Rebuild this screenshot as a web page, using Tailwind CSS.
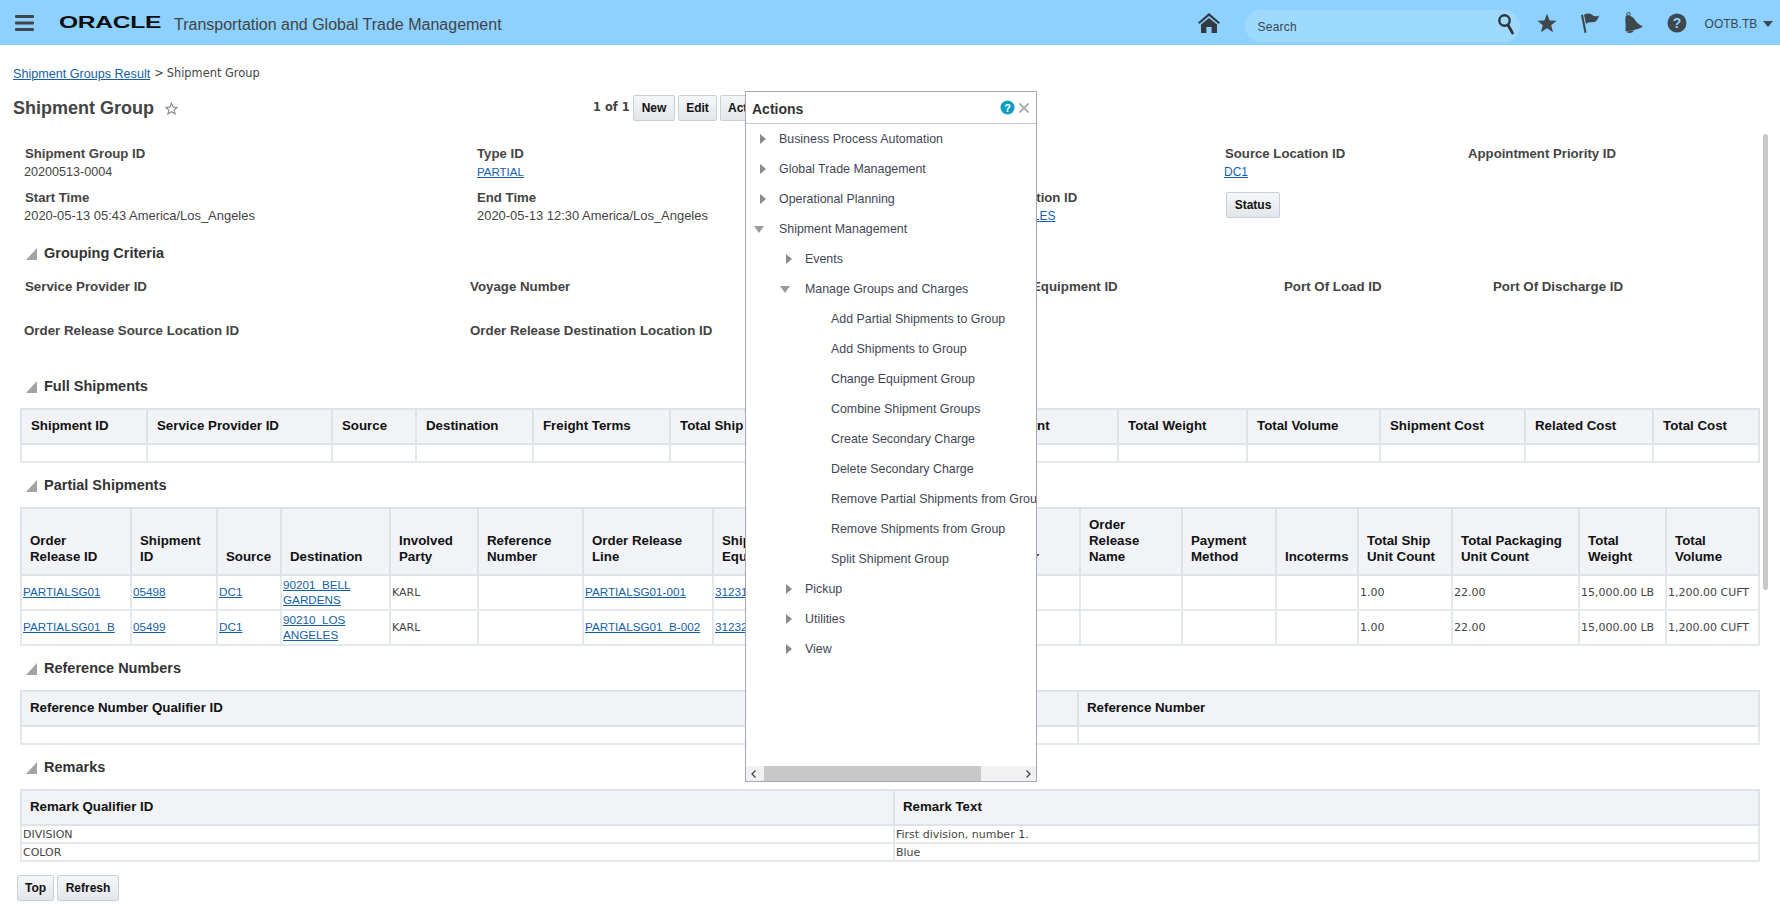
<!DOCTYPE html>
<html lang="en">
<head>
<meta charset="utf-8">
<title>Shipment Group</title>
<script src="https://cdn.jsdelivr.net/npm/@tailwindcss/browser@4"></script>
</head>
<body class="relative h-[906px] overflow-hidden bg-white font-['Liberation_Sans',Arial,sans-serif] text-[#444]">
  <!-- top bar -->
  <header class="flex h-[45px] items-center bg-[#8cd1ff]">
    <svg class="ml-[15px] h-[18px] w-[22px]" viewBox="0 0 22 18" fill="#3f474d"><rect y="1" width="19" height="3" rx="1"/><rect y="7.5" width="19" height="3" rx="1"/><rect y="14" width="19" height="3" rx="1"/></svg>
    <div class="ml-[22px] flex w-[115px] items-center">
      <span class="origin-left scale-x-[1.49] text-[16.5px] leading-none font-bold tracking-[-0.2px] text-[#0c0c0c]">ORACLE</span>
    </div>
    <span class="pt-[4px] text-[16px] text-[#444]">Transportation and Global Trade Management</span>
    <svg class="ml-[695px] h-[22px] w-[24px]" viewBox="0 0 24 22" fill="#333b40"><path d="M12 1 L23 10.5 L21.6 12 L12 4 L2.4 12 L1 10.5 Z"/><path d="M12 6 L20 12.5 V21 H14.6 V15 H9.4 V21 H4 V12.5 Z"/></svg>
    <div class="mt-[7px] ml-[24px] flex h-[32px] w-[275px] items-center justify-between rounded-full bg-[#9ed9ff] pr-[5px] pl-[13px]">
      <span class="pt-[2px] text-[12px] tracking-[0.2px] text-[#3c4650]">Search</span>
      <svg class="-mt-[4px] h-[22px] w-[18px]" viewBox="0 0 18 22" fill="none" stroke="#2f373c"><circle cx="7.5" cy="7.5" r="5.2" stroke-width="2.4"/><path d="M11 12 L15.5 20" stroke-width="2.8" stroke-linecap="round"/></svg>
    </div>
    <svg class="ml-[17px] h-[20px] w-[20px]" viewBox="0 0 24 24" fill="#3f474d"><path d="M12 1 L15.2 9 L23.5 9.4 L17 14.8 L19.2 23 L12 18.4 L4.8 23 L7 14.8 L.5 9.4 L8.8 9 Z"/></svg>
    <svg class="ml-[22px] h-[22px] w-[22px]" viewBox="0 0 22 22" fill="#3f474d"><path d="M2 3 L4 2.500 L7.500 20.500 L5.500 21 Z"/><path d="M5 3 C9 0.500 12 1.500 14 3.500 C16 4.800 18 4.500 20.500 3.500 C19 6 18.500 8 16.500 9.500 C13.500 11 10 9 7 12 Z"/></svg>
    <svg class="ml-[23px] h-[22px] w-[20px]" viewBox="0 0 20 22" fill="#3f474d"><circle cx="4.500" cy="2.200" r="1.700" fill="none" stroke="#3f474d"/><path d="M1.800 3.800 C5.500 2.800 9 4.500 11 8 C12.800 11 15.500 12.800 19 14.500 C14 17.500 7 19.300 1.200 19 C2.600 14 .5 9 1.800 3.800 Z"/><path d="M2.500 19.500 C4 21.800 8.500 21.500 10 18.500 Z"/></svg>
    <svg class="ml-[23px] h-[20px] w-[20px]" viewBox="0 0 20 20"><circle cx="10" cy="10" r="9.500" fill="#3f474d"/><text x="10" y="15" text-anchor="middle" font-size="14" font-weight="700" font-family="Liberation Sans" fill="#8cd1ff">?</text></svg>
    <span class="ml-[18px] pt-[2px] text-[12px] text-[#3c4650]">OOTB.TB</span>
    <svg class="mt-[2px] ml-[6px] h-[6px] w-[10px]" viewBox="0 0 10 6" fill="#3f474d"><path d="M0 0 H10 L5 6 Z"/></svg>
  </header>

  <!-- breadcrumb -->
  <div class="mt-[21px] flex h-[16px] items-center pl-[13px] text-[11.4px] font-['DejaVu_Sans',sans-serif]">
    <a class="font-['Liberation_Sans',sans-serif] text-[12.6px] text-[#145fa8] underline">Shipment Groups Result</a>
    <span class="mr-[3px] ml-[4px]">&gt;</span>
    <span>Shipment Group</span>
  </div>

  <!-- title and toolbar -->
  <div class="mt-[13px] flex h-[26px] items-center pl-[13px]">
    <h1 class="w-[152px] text-[18px] font-bold text-[#444]">Shipment Group</h1>
    <svg class="h-[13px] w-[13px]" viewBox="0 0 24 24" fill="none" stroke="#888" stroke-width="2"><path d="M12 2 L15 9.500 L22.500 10 L16.800 14.800 L18.700 22 L12 18 L5.300 22 L7.200 14.800 L1.500 10 L9 9.500 Z"/></svg>
    <span class="ml-[415px] w-[40px] font-['DejaVu_Sans',sans-serif] text-[11.4px] font-bold">1 of 1</span>
    <div class="flex gap-[3px]">
      <button class="h-[26px] w-[42px] rounded-[2px] border border-[#c9d1d8] bg-linear-to-b from-[#f5f6f8] to-[#e2e6ea] text-[12px] font-bold text-[#111]">New</button>
      <button class="h-[26px] w-[39px] rounded-[2px] border border-[#c9d1d8] bg-linear-to-b from-[#f5f6f8] to-[#e2e6ea] text-[12px] font-bold text-[#111]">Edit</button>
      <button class="h-[26px] w-[60px] rounded-[2px] border border-[#c9d1d8] bg-linear-to-b from-[#f5f6f8] to-[#e2e6ea] text-[12px] font-bold text-[#111]">Actions</button>
    </div>
  </div>

  <!-- header fields -->
  <div class="mt-[24px] grid grid-cols-[452px_453px_295px_243px_1fr] gap-y-[8px] pl-[25px] text-[12.95px] leading-[18px]">
    <div><div class="text-[13.2px] font-bold">Shipment Group ID</div><div class="-ml-px text-[12.6px]">20200513-0004</div></div>
    <div><div class="text-[13.2px] font-bold">Type ID</div><a class="text-[11.5px] text-[#145fa8] underline">PARTIAL</a></div>
    <div><div class="text-[13.2px] font-bold">Indicator</div></div>
    <div><div class="text-[13.2px] font-bold">Source Location ID</div><a class="-ml-px text-[12px] text-[#145fa8] underline">DC1</a></div>
    <div><div class="text-[13.2px] font-bold">Appointment Priority ID</div></div>
    <div><div class="text-[13.2px] font-bold">Start Time</div><div class="-ml-px">2020-05-13 05:43 America/Los_Angeles</div></div>
    <div><div class="text-[13.2px] font-bold">End Time</div><div>2020-05-13 12:30 America/Los_Angeles</div></div>
    <div><div class="text-[13.2px] font-bold">Destination Location ID</div><a class="-ml-[2px] text-[12px] text-[#145fa8] underline">90210_LOS_ANGELES</a></div>
    <div class="pt-[3px] pl-px"><button class="h-[26px] w-[54px] rounded-[2px] border border-[#c9d1d8] bg-linear-to-b from-[#f5f6f8] to-[#e2e6ea] text-[12px] font-bold text-[#111]">Status</button></div>
    <div></div>
  </div>

  <!-- grouping criteria -->
  <div class="mt-[19px] flex h-[20px] items-center pl-[26px] text-[14.5px] font-bold text-[#333]">
    <svg class="mr-[7px] h-[12px] w-[11px]" viewBox="0 0 11 12" fill="#a3a3a3"><path d="M11 0 V12 H0 Z"/></svg>Grouping Criteria
  </div>
  <div class="mt-[14px] grid grid-cols-[445px_562px_252px_209px_1fr] gap-y-[26px] pl-[25px] text-[13.3px] leading-[18px] font-bold">
    <div>Service Provider ID</div><div>Voyage Number</div><div>Equipment ID</div><div>Port Of Load ID</div><div>Port Of Discharge ID</div>
    <div class="-ml-px">Order Release Source Location ID</div><div>Order Release Destination Location ID</div>
  </div>

  <!-- full shipments -->
  <div class="mt-[37px] flex h-[20px] items-center pl-[26px] text-[14.5px] font-bold text-[#333]">
    <svg class="mr-[7px] h-[12px] w-[11px]" viewBox="0 0 11 12" fill="#a3a3a3"><path d="M11 0 V12 H0 Z"/></svg>Full Shipments
  </div>
  <table class="mt-[11px] ml-[20px] w-[1740px] table-fixed border-collapse text-left text-[13.3px] leading-[16px]">
    <thead>
      <tr class="h-[35px] bg-[#f1f3f7] text-[#111] [&>th]:border-2 [&>th]:border-[#dde3e9] [&>th]:pb-px [&>th]:pl-[9px] [&>th]:font-bold">
        <th class="w-[126px]">Shipment ID</th><th class="w-[185px]">Service Provider ID</th><th class="w-[84px]">Source</th><th class="w-[117px]">Destination</th><th class="w-[137px]">Freight Terms</th><th class="w-[197px]">Total Ship Unit Count</th><th class="w-[251px]">Total Packaging Unit Count</th><th class="w-[129px]">Total Weight</th><th class="w-[133px]">Total Volume</th><th class="w-[145px]">Shipment Cost</th><th class="w-[128px]">Related Cost</th><th>Total Cost</th>
      </tr>
    </thead>
    <tbody>
      <tr class="h-[18px] [&>td]:border-2 [&>td]:border-[#e3e8ed]"><td></td><td></td><td></td><td></td><td></td><td></td><td></td><td></td><td></td><td></td><td></td><td></td></tr>
    </tbody>
  </table>

  <!-- partial shipments -->
  <div class="mt-[13px] flex h-[20px] items-center pl-[26px] text-[14.5px] font-bold text-[#333]">
    <svg class="mr-[7px] h-[12px] w-[11px]" viewBox="0 0 11 12" fill="#a3a3a3"><path d="M11 0 V12 H0 Z"/></svg>Partial Shipments
  </div>
  <table class="mt-[11px] ml-[20px] w-[1740px] table-fixed border-collapse text-left text-[13.3px] leading-[16px]">
    <thead>
      <tr class="h-[67px] bg-[#f1f3f7] text-[#111] [&>th]:border-2 [&>th]:border-[#dde3e9] [&>th]:pb-[9px] [&>th]:pl-[8px] [&>th]:align-bottom [&>th]:font-bold">
        <th class="w-[110px]">Order<br>Release ID</th><th class="w-[86px]">Shipment<br>ID</th><th class="w-[64px]">Source</th><th class="w-[109px]">Destination</th><th class="w-[88px]">Involved<br>Party</th><th class="w-[105px]">Reference<br>Number</th><th class="w-[130px]">Order Release<br>Line</th><th class="w-[267px]">Shipment<br>Equipment ID</th><th class="w-[100px]">Seal<br>Number</th><th class="w-[102px]">Order<br>Release<br>Name</th><th class="w-[94px]">Payment<br>Method</th><th class="w-[82px]">Incoterms</th><th class="w-[94px]">Total Ship<br>Unit Count</th><th class="w-[127px]">Total Packaging<br>Unit Count</th><th class="w-[87px]">Total<br>Weight</th><th>Total<br>Volume</th>
      </tr>
    </thead>
    <tbody class="font-['DejaVu_Sans',sans-serif] text-[11px] leading-[14px]">
      <tr class="h-[35px] [&>td]:border-2 [&>td]:border-[#e3e8ed] [&>td]:pl-px [&_a]:font-['Liberation_Sans',sans-serif] [&_a]:text-[11.7px] [&_a]:text-[#145fa8] [&_a]:underline">
        <td><a>PARTIALSG01</a></td><td><a>05498</a></td><td><a>DC1</a></td><td><a>90201_BELL GARDENS</a></td><td>KARL</td><td></td><td><a>PARTIALSG01-001</a></td><td><a>31231</a></td><td></td><td></td><td></td><td></td><td>1.00</td><td>22.00</td><td class="whitespace-nowrap">15,000.00 LB</td><td class="whitespace-nowrap">1,200.00 CUFT</td>
      </tr>
      <tr class="h-[35px] [&>td]:border-2 [&>td]:border-[#e3e8ed] [&>td]:pl-px [&_a]:font-['Liberation_Sans',sans-serif] [&_a]:text-[11.7px] [&_a]:text-[#145fa8] [&_a]:underline">
        <td><a>PARTIALSG01_B</a></td><td><a>05499</a></td><td><a>DC1</a></td><td><a>90210_LOS ANGELES</a></td><td>KARL</td><td></td><td><a>PARTIALSG01_B-002</a></td><td><a>31232</a></td><td></td><td></td><td></td><td></td><td>1.00</td><td>22.00</td><td class="whitespace-nowrap">15,000.00 LB</td><td class="whitespace-nowrap">1,200.00 CUFT</td>
      </tr>
    </tbody>
  </table>

  <!-- reference numbers -->
  <div class="mt-[13px] flex h-[20px] items-center pl-[26px] text-[14.5px] font-bold text-[#333]">
    <svg class="mr-[7px] h-[12px] w-[11px]" viewBox="0 0 11 12" fill="#a3a3a3"><path d="M11 0 V12 H0 Z"/></svg>Reference Numbers
  </div>
  <table class="mt-[11px] ml-[20px] w-[1740px] table-fixed border-collapse text-left text-[13.3px] leading-[16px]">
    <thead>
      <tr class="h-[35px] bg-[#f1f3f7] text-[#111] [&>th]:border-2 [&>th]:border-[#dde3e9] [&>th]:pb-px [&>th]:pl-[8px] [&>th]:font-bold">
        <th class="w-[1057px]">Reference Number Qualifier ID</th><th>Reference Number</th>
      </tr>
    </thead>
    <tbody>
      <tr class="h-[18px] [&>td]:border-2 [&>td]:border-[#e3e8ed]"><td></td><td></td></tr>
    </tbody>
  </table>

  <!-- remarks -->
  <div class="mt-[13px] flex h-[20px] items-center pl-[26px] text-[14.5px] font-bold text-[#333]">
    <svg class="mr-[7px] h-[12px] w-[11px]" viewBox="0 0 11 12" fill="#a3a3a3"><path d="M11 0 V12 H0 Z"/></svg>Remarks
  </div>
  <table class="mt-[11px] ml-[20px] w-[1740px] table-fixed border-collapse text-left text-[13.3px] leading-[16px]">
    <thead>
      <tr class="h-[35px] bg-[#f1f3f7] text-[#111] [&>th]:border-2 [&>th]:border-[#dde3e9] [&>th]:pb-px [&>th]:pl-[8px] [&>th]:font-bold">
        <th class="w-[873px]">Remark Qualifier ID</th><th>Remark Text</th>
      </tr>
    </thead>
    <tbody class="font-['DejaVu_Sans',sans-serif] text-[11px] leading-[15px]">
      <tr class="h-[18px] [&>td]:border-2 [&>td]:border-[#e3e8ed] [&>td]:pl-px"><td>DIVISION</td><td>First division, number 1.</td></tr>
      <tr class="h-[18px] [&>td]:border-2 [&>td]:border-[#e3e8ed] [&>td]:pl-px"><td>COLOR</td><td>Blue</td></tr>
    </tbody>
  </table>

  <div class="mt-[13px] ml-[17px] flex gap-[3px]">
    <button class="h-[26px] w-[37px] rounded-[2px] border border-[#c9d1d8] bg-linear-to-b from-[#f5f6f8] to-[#e2e6ea] text-[12px] font-bold text-[#111]">Top</button>
    <button class="h-[26px] w-[62px] rounded-[2px] border border-[#c9d1d8] bg-linear-to-b from-[#f5f6f8] to-[#e2e6ea] text-[12px] font-bold text-[#111]">Refresh</button>
  </div>

  <!-- page scrollbar -->
  <div class="absolute top-[134px] left-[1763px] h-[456px] w-[5px] rounded-full bg-[#c8c8c8]"></div>

  <!-- actions popup -->
  <aside class="absolute top-[91px] left-[745px] flex h-[691px] w-[292px] flex-col border border-[#a3a7b8] bg-white">
    <div class="flex h-[32px] shrink-0 items-center border-b border-[#c4c7d2] pr-[6px] pl-[6px]">
      <span class="pt-[4px] text-[14px] font-bold text-[#333]">Actions</span>
      <svg class="ml-auto h-[15px] w-[15px]" viewBox="0 0 15 15"><circle cx="7.500" cy="7.500" r="7" fill="#0f9cc2"/><text x="7.500" y="11.500" text-anchor="middle" font-size="11" font-weight="700" font-family="Liberation Sans" fill="#fff">?</text></svg>
      <svg class="ml-[3px] h-[12px] w-[12px]" viewBox="0 0 12 12" stroke="#9a9a9a" stroke-width="1.600"><path d="M1.500 1.500 L10.500 10.500 M10.500 1.500 L1.500 10.500"/></svg>
    </div>
    <ul class="flex-1 overflow-hidden text-[12.4px] whitespace-nowrap text-[#3f4654] [&>li]:flex [&>li]:h-[30px] [&>li]:items-center">
      <li class="pl-[14px]"><svg class="mr-[13px] h-[10px] w-[6px]" viewBox="0 0 6 10" fill="#8a8a8a"><path d="M0 0 L6 5 L0 10 Z"/></svg>Business Process Automation</li>
      <li class="pl-[14px]"><svg class="mr-[13px] h-[10px] w-[6px]" viewBox="0 0 6 10" fill="#8a8a8a"><path d="M0 0 L6 5 L0 10 Z"/></svg>Global Trade Management</li>
      <li class="pl-[14px]"><svg class="mr-[13px] h-[10px] w-[6px]" viewBox="0 0 6 10" fill="#8a8a8a"><path d="M0 0 L6 5 L0 10 Z"/></svg>Operational Planning</li>
      <li class="pl-[8px]"><svg class="mr-[15px] h-[7px] w-[10px]" viewBox="0 0 10 7" fill="#9a9a9a"><path d="M0 0 H10 L5 7 Z"/></svg>Shipment Management</li>
      <li class="pl-[40px]"><svg class="mr-[13px] h-[10px] w-[6px]" viewBox="0 0 6 10" fill="#8a8a8a"><path d="M0 0 L6 5 L0 10 Z"/></svg>Events</li>
      <li class="pl-[34px]"><svg class="mr-[15px] h-[7px] w-[10px]" viewBox="0 0 10 7" fill="#9a9a9a"><path d="M0 0 H10 L5 7 Z"/></svg>Manage Groups and Charges</li>
      <li class="pl-[85px]">Add Partial Shipments to Group</li>
      <li class="pl-[85px]">Add Shipments to Group</li>
      <li class="pl-[85px]">Change Equipment Group</li>
      <li class="pl-[85px]">Combine Shipment Groups</li>
      <li class="pl-[85px]">Create Secondary Charge</li>
      <li class="pl-[85px]">Delete Secondary Charge</li>
      <li class="pl-[85px]">Remove Partial Shipments from Group</li>
      <li class="pl-[85px]">Remove Shipments from Group</li>
      <li class="pl-[85px]">Split Shipment Group</li>
      <li class="pl-[40px]"><svg class="mr-[13px] h-[10px] w-[6px]" viewBox="0 0 6 10" fill="#8a8a8a"><path d="M0 0 L6 5 L0 10 Z"/></svg>Pickup</li>
      <li class="pl-[40px]"><svg class="mr-[13px] h-[10px] w-[6px]" viewBox="0 0 6 10" fill="#8a8a8a"><path d="M0 0 L6 5 L0 10 Z"/></svg>Utilities</li>
      <li class="pl-[40px]"><svg class="mr-[13px] h-[10px] w-[6px]" viewBox="0 0 6 10" fill="#8a8a8a"><path d="M0 0 L6 5 L0 10 Z"/></svg>View</li>
    </ul>
    <div class="flex h-[15px] shrink-0 items-center justify-between bg-[#f1f1f1] px-[5px]">
      <svg class="h-[8px] w-[5px]" viewBox="0 0 5 8" fill="none" stroke="#444" stroke-width="1.300"><path d="M4.500 .5 L1 4 L4.500 7.500"/></svg>
      <div class="mr-[45px] ml-[8px] h-[15px] flex-1 bg-[#c8c8c8]"></div>
      <svg class="h-[8px] w-[5px]" viewBox="0 0 5 8" fill="none" stroke="#444" stroke-width="1.300"><path d="M.5 .5 L4 4 L.5 7.500"/></svg>
    </div>
  </aside>
</body>
</html>
